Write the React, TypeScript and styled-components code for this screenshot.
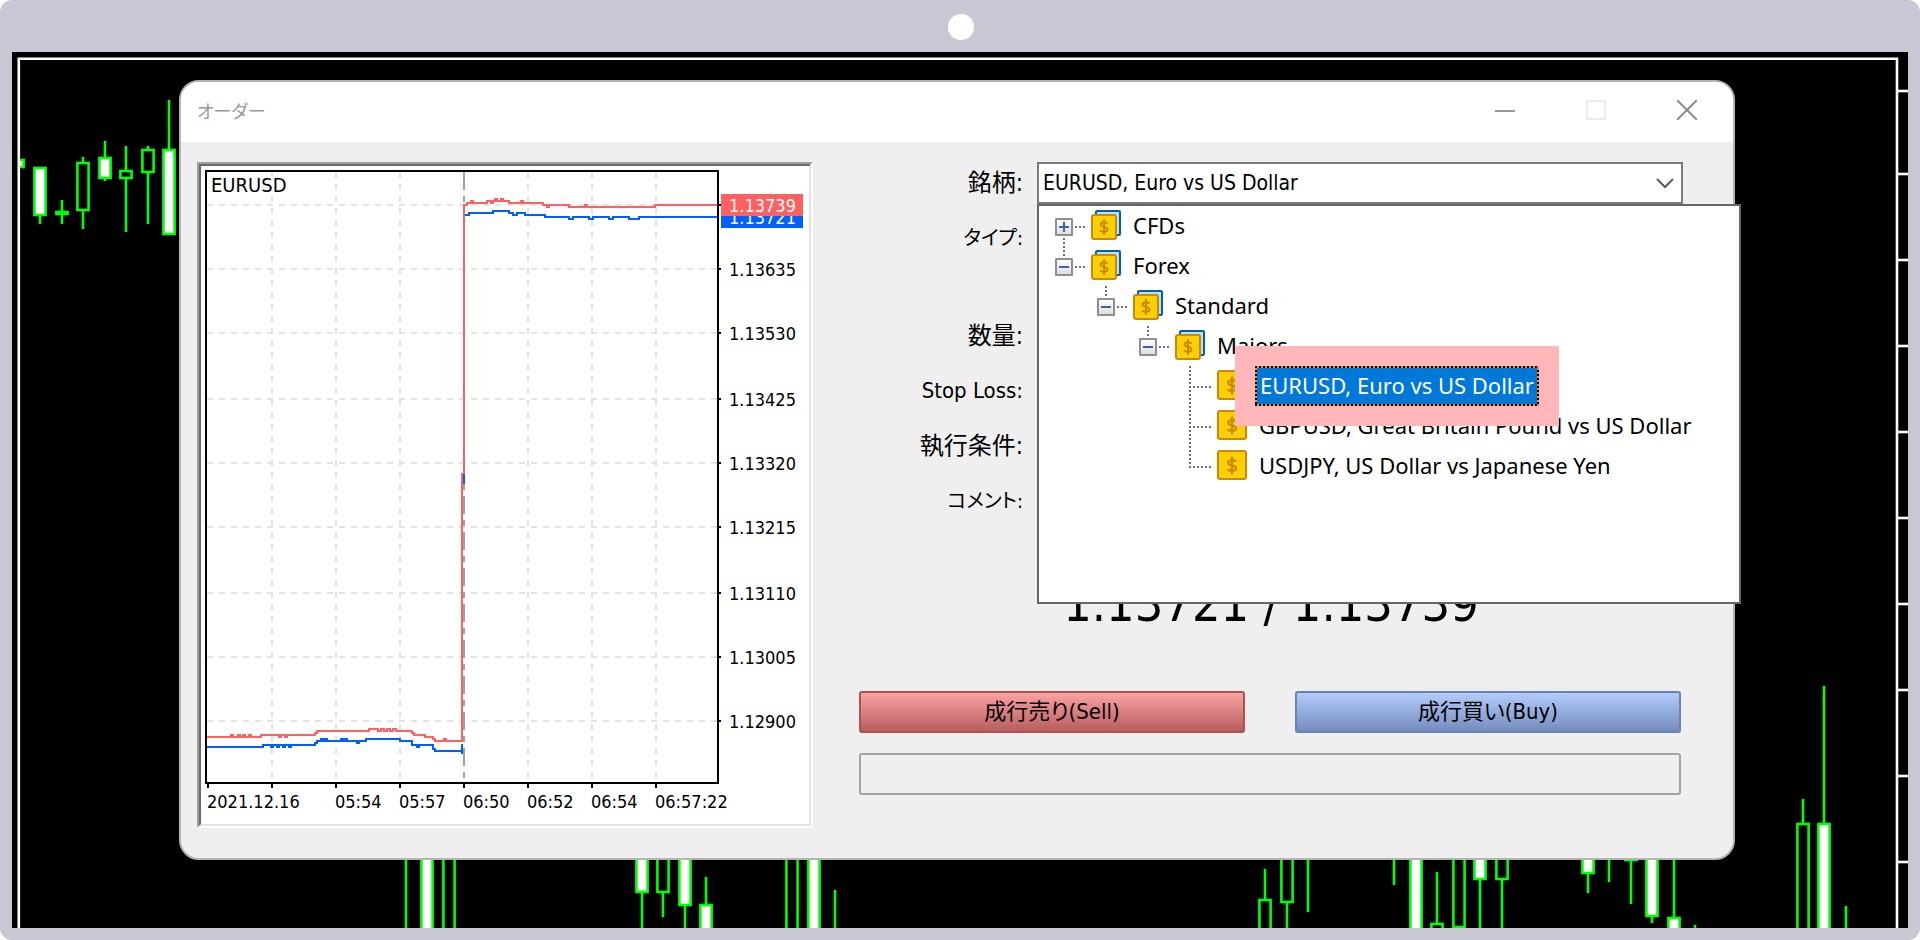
import React from "react";
import styled, { createGlobalStyle, css } from "styled-components";

const tahoma = `"DejaVu Sans Condensed", "Noto Sans CJK JP", sans-serif`;
const segoe = `"Noto Sans", "Noto Sans CJK JP", sans-serif`;
const gothic = `"Noto Sans CJK JP", sans-serif`;

const GlobalStyle = createGlobalStyle`
  *, *::before, *::after { box-sizing: border-box; }
  body { margin: 0; background: #fff; color: #000; font-family: ${tahoma}; }
  button, input, select { font: inherit; color: inherit; }
`;

/* ---------- device frame ---------- */

const Device = styled.div`
  position: relative;
  display: flex;
  min-height: 100vh;
  padding: 52px 12px 12px;
  border-radius: 12px;
  background: #c8c7d3;
`;

const Camera = styled.span`
  position: absolute;
  top: 14px;
  left: 50%;
  width: 26px;
  height: 26px;
  margin-left: -12px;
  border-radius: 50%;
  background: #fff;
`;

const Screen = styled.main`
  position: relative;
  flex: 1;
  padding: 28px 173px 68px 167px;
  overflow: hidden;
  background: #000;
`;

const Backdrop = styled.svg`
  position: absolute;
  inset: 0;
  width: 100%;
  height: 100%;
`;

type Candle = {
  x: number;
  high: number;
  low: number;
  top?: number;
  bottom?: number;
  filled?: boolean;
};

const candles: Candle[] = [
  { x: 18, high: 159, low: 168, top: 160, bottom: 167, filled: true },
  { x: 40, high: 167, low: 224, top: 168, bottom: 215, filled: true },
  { x: 62, high: 200, low: 224, top: 212, bottom: 214 },
  { x: 83, high: 157, low: 229, top: 163, bottom: 210 },
  { x: 105, high: 141, low: 181, top: 158, bottom: 178, filled: true },
  { x: 126, high: 146, low: 232, top: 171, bottom: 178 },
  { x: 148, high: 146, low: 224, top: 150, bottom: 172 },
  { x: 169, high: 100, low: 235, top: 150, bottom: 234, filled: true },
  { x: 406, high: 800, low: 940 },
  { x: 427, high: 800, low: 940, top: 800, bottom: 940, filled: true },
  { x: 449, high: 800, low: 800, top: 800, bottom: 940 },
  { x: 642, high: 800, low: 940, top: 800, bottom: 892, filled: true },
  { x: 663, high: 800, low: 917, top: 800, bottom: 892 },
  { x: 685, high: 800, low: 940, top: 800, bottom: 905, filled: true },
  { x: 706, high: 877, low: 940, top: 905, bottom: 940, filled: true },
  { x: 792, high: 800, low: 800, top: 800, bottom: 940 },
  { x: 814, high: 800, low: 940, top: 800, bottom: 940, filled: true },
  { x: 835, high: 890, low: 940 },
  { x: 1265, high: 869, low: 899, top: 900, bottom: 940 },
  { x: 1287, high: 903, low: 940, top: 800, bottom: 902 },
  { x: 1308, high: 800, low: 912 },
  { x: 1394, high: 800, low: 885 },
  { x: 1416, high: 800, low: 940, top: 800, bottom: 940, filled: true },
  { x: 1437, high: 872, low: 923, top: 924, bottom: 940 },
  { x: 1459, high: 800, low: 800, top: 800, bottom: 927 },
  { x: 1480, high: 800, low: 940, top: 800, bottom: 879, filled: true },
  { x: 1502, high: 879, low: 940, top: 800, bottom: 879 },
  { x: 1588, high: 800, low: 893, top: 800, bottom: 873, filled: true },
  { x: 1609, high: 800, low: 882 },
  { x: 1631, high: 800, low: 904, top: 840, bottom: 860 },
  { x: 1652, high: 800, low: 923, top: 800, bottom: 916, filled: true },
  { x: 1674, high: 800, low: 940, top: 918, bottom: 940, filled: true },
  { x: 1695, high: 925, low: 940 },
  { x: 1803, high: 799, low: 823, top: 824, bottom: 940 },
  { x: 1824, high: 686, low: 940, top: 824, bottom: 940, filled: true },
  { x: 1846, high: 906, low: 940 },
];

const scaleTicks = [91, 174, 260, 346, 432, 518, 604, 690, 776, 862];

function MarketBackdrop() {
  return (
    <Backdrop
      viewBox="12 52 1896 876"
      preserveAspectRatio="xMidYMid slice"
      aria-hidden="true"
    >
      {candles.map((c) => (
        <g key={c.x} stroke="#00ff00" strokeWidth="2.6">
          {c.high < c.low && <line x1={c.x} x2={c.x} y1={c.high} y2={c.low} />}
          {c.top !== undefined && c.bottom !== undefined && (
            <rect
              x={c.x - 5.6}
              y={c.top}
              width="11.2"
              height={c.bottom - c.top}
              fill={c.filled ? "#fff" : "#000"}
            />
          )}
        </g>
      ))}
      <rect x="12" y="52" width="6" height="888" fill="#000" />
      <g stroke="#fff" strokeWidth="2.6">
        <path d="M18.8 940V58.8H1897V940" fill="none" />
        {scaleTicks.map((y) => (
          <line key={y} x1="1898" x2="1908" y1={y} y2={y} />
        ))}
      </g>
    </Backdrop>
  );
}

/* ---------- order window ---------- */

const Dialog = styled.section`
  position: relative;
  border: 2px solid #b4b4b4;
  border-radius: 20px;
  background: #efefef;
`;

const TitleBar = styled.header`
  display: flex;
  align-items: center;
  justify-content: space-between;
  height: 60px;
  padding: 0 1px 4px 16px;
  border-radius: 18px 18px 0 0;
  background: #fff;
`;

const Title = styled.h1`
  margin: 0;
  color: #999;
  font: 400 18px/40px ${gothic};
  font-feature-settings: "palt";
`;

const WindowButtons = styled.div`
  display: flex;
`;

const WindowButton = styled.button`
  display: grid;
  place-items: center;
  width: 91px;
  height: 56px;
  margin: 0;
  padding: 0;
  border: 0;
  background: none;
`;

const Body = styled.div`
  display: flex;
  gap: 46px;
  padding: 20px 50px 30px 16px;
`;

/* ---------- tick chart ---------- */

const ChartPanel = styled.figure`
  flex: 0 0 616px;
  margin: 0;
  border: 2px solid;
  border-color: #a0a0a0 #fff #fff #a0a0a0;
`;

const ChartInset = styled.div`
  border: 2px solid;
  border-color: #696969 #e3e3e3 #e3e3e3 #696969;
  background: #fff;
`;

const ChartSvg = styled.svg`
  display: block;
  width: 608px;
  height: 658px;
  font-family: ${tahoma};
  font-size: 18px;
`;

const columns = [272, 336, 400, 528, 592, 656];
const priceRows: [number, string][] = [
  [269, "1.13635"],
  [333, "1.13530"],
  [399, "1.13425"],
  [463, "1.13320"],
  [527, "1.13215"],
  [593, "1.13110"],
  [657, "1.13005"],
  [721, "1.12900"],
];
const times: [number, string][] = [
  [207, "2021.12.16"],
  [335, "05:54"],
  [399, "05:57"],
  [463, "06:50"],
  [527, "06:52"],
  [591, "06:54"],
  [655, "06:57:22"],
];

const askLine =
  "M207 737H231V735H233V737H238V735H240V737H243V735H245V737H249V735H251V737H261V735H279V737H281V735H285V737H287V735H315V733H317V731H369V729H378V731H381V729H384V731H387V729H390V731H393V729H396V731H412V733H414V735H425V737H433V739H435V741H444V739H446V741H462V474H464V205H467V203H471V201H473V203H487V201H491V203H493V201H495V199H497V201H501V199H503V201H509V203H521V201H523V203H543V205H547V207H549V205H569V207H585V205H587V207H655V205H717";
const bidLine =
  "M207 747H263V745H271V747H273V745H277V747H279V745H283V747H285V745H289V747H291V745H315V743H317V741H321V739H323V741H325V739H327V741H341V739H343V741H345V739H347V741H357V743H359V741H366V739H400V741H412V745H417V747H419V745H425V745H433V749H435V751H462";
const bidTopLine =
  "M465 215H469V213H493V211H509V213H513V215H517V213H525V215H545V217H569V219H573V217H589V219H593V217H609V219H613V217H629V219H639V217H717";

function TickChart() {
  return (
    <ChartPanel>
      <ChartInset>
        <ChartSvg viewBox="201 166 608 658" role="img" aria-label="EURUSD">
          <g shapeRendering="crispEdges" fill="none" strokeWidth="2">
            <g stroke="#e3e3e3" strokeDasharray="6 6">
              {columns.map((x) => (
                <line key={x} x1={x} x2={x} y1="172" y2="782" />
              ))}
              <line x1="207" x2="717" y1="205" y2="205" />
              {priceRows.map(([y]) => (
                <line key={y} x1="207" x2="717" y1={y} y2={y} />
              ))}
            </g>
            <line x1="464" x2="464" y1="172" y2="782" stroke="#a0a0a0" strokeDasharray="18 6 6 6" />
            <path d={bidLine} stroke="#0060ff" />
            <path d={bidTopLine} stroke="#0060ff" />
            <path d={askLine} stroke="#ff6060" />
            <path d="M462 744V754M464 474V484" stroke="#0060ff" />
            <rect x="206" y="171" width="512" height="612" stroke="#000" />
            <g stroke="#000">
              <line x1="718" x2="721" y1="205" y2="205" />
              {priceRows.map(([y]) => (
                <line key={y} x1="718" x2="721" y1={y} y2={y} />
              ))}
              {[208, 272, 336, 400, 464, 528, 592, 656].map((x) => (
                <line key={x} x1={x} x2={x} y1="782" y2="788" />
              ))}
            </g>
          </g>
          <rect x="208" y="176" width="82" height="20" fill="#fff" />
          <text x="211" y="192" fontSize="20">
            EURUSD
          </text>
          {priceRows.map(([y, label]) => (
            <text key={label} x="729" y={y + 7}>
              {label}
            </text>
          ))}
          {times.map(([x, label]) => (
            <text key={label} x={x} y="808">
              {label}
            </text>
          ))}
          <rect x="721" y="206" width="82" height="22" fill="#0060ff" />
          <text x="729" y="224" fill="#fff">
            1.13721
          </text>
          <rect x="721" y="194" width="82" height="22" fill="#ff6060" />
          <text x="729" y="212" fill="#fff">
            1.13739
          </text>
        </ChartSvg>
      </ChartInset>
    </ChartPanel>
  );
}

/* ---------- order form ---------- */

const Form = styled.form`
  flex: 1;
  min-width: 0;
`;

const Field = styled.div<{ $spaced?: boolean }>`
  position: relative;
  display: grid;
  grid-template-columns: 164px 1fr;
  column-gap: 14px;
  align-items: center;
  height: 42px;
  margin-bottom: ${(p) => (p.$spaced ? 56 : 13)}px;
`;

const labelSizes = { kanji: 24, latin: 22, kana: 20 };

const Label = styled.label<{ $script: keyof typeof labelSizes }>`
  text-align: right;
  white-space: nowrap;
  line-height: 36px;
  font-family: ${tahoma};
  font-size: ${(p) => labelSizes[p.$script]}px;
  font-feature-settings: "palt";
`;

const box = css`
  width: 100%;
  height: 42px;
  margin: 0;
  border: 2px solid #7a7a7a;
  border-radius: 0;
  background: #fff;
`;

const Input = styled.input`
  ${box}
`;

const SelectWrap = styled.div`
  position: relative;
`;

const Select = styled.select`
  ${box}
  display: block;
  appearance: none;
  padding: 0 40px 0 4px;
  font-family: ${tahoma};
  font-size: 21px;
`;

const SelectArrow = styled.svg`
  position: absolute;
  right: 9px;
  top: 13px;
  width: 18px;
  height: 16px;
  pointer-events: none;
`;

const Price = styled.p`
  margin: 56px 0 61px;
  text-align: center;
  font-size: 50px;
  line-height: 52px;
  white-space: nowrap;
`;

const Actions = styled.div`
  display: grid;
  grid-template-columns: 1fr 1fr;
  gap: 50px;
  margin-bottom: 20px;
  padding-right: 2px;
`;

const ActionButton = styled.button<{ $side: "sell" | "buy" }>`
  height: 42px;
  padding: 0;
  border: 2px solid ${(p) => (p.$side === "sell" ? "#ae5353" : "#6a82b4")};
  border-radius: 3px;
  background: ${(p) =>
    p.$side === "sell"
      ? "linear-gradient(#fba3a3, #b75d5d)"
      : "linear-gradient(#b4ccfb, #748dbd)"};
  font-family: ${tahoma};
  font-size: 22px;
  line-height: 36px;
  font-feature-settings: "palt";
`;

const Status = styled.output`
  display: block;
  height: 42px;
  margin-right: 2px;
  border: 2px solid #a3a3a3;
  border-radius: 3px;
`;

/* ---------- symbol tree ---------- */

const Popup = styled.div`
  position: absolute;
  z-index: 2;
  top: 42px;
  left: 178px;
  right: -58px;
  height: 400px;
  border: 2px solid #666;
  background: #fff;
`;

const Tree = styled.ul`
  margin: 0;
  padding: 0;
  list-style: none;
`;

const dots = (direction: string) => css`
  background: repeating-linear-gradient(${direction}, #707070 0 2px, transparent 2px 4px);
`;

const Row = styled.li<{ $depth: number; $lineTop: number; $lineHeight: number }>`
  position: relative;
  display: flex;
  align-items: center;
  height: 40px;
  padding-left: ${(p) => 16 + p.$depth * 42}px;

  &::before {
    content: "";
    position: absolute;
    left: ${(p) => 24 + p.$depth * 42}px;
    top: ${(p) => p.$lineTop}px;
    width: 2px;
    height: ${(p) => p.$lineHeight}px;
    ${dots("to bottom")}
  }
`;

const Expander = styled.button`
  display: grid;
  place-items: center;
  width: 18px;
  height: 18px;
  margin-top: 2px;
  padding: 0;
  border: 2px solid #8f8f8f;
  border-radius: 1px;
  background: linear-gradient(#fff, #dedede);
`;

const Branch = styled.span<{ $leaf?: boolean }>`
  width: ${(p) => (p.$leaf ? 22 : 10)}px;
  height: 2px;
  margin: ${(p) => (p.$leaf ? "2px 6px 0 8px" : "2px 6px 0 2px")};
  ${dots("to right")}
`;

const Icon = styled.svg`
  width: 30px;
  height: 30px;
  margin-bottom: 2px;
`;

const itemText = css`
  height: 40px;
  padding: 0 4px 3px;
  font-family: ${segoe};
  font-size: 22px;
  line-height: 34px;
  white-space: nowrap;
`;

const ItemLabel = styled.button`
  ${itemText}
  margin: 0 0 0 8px;
  border: 0;
  background: none;
`;

const dash = (direction: string) =>
  `repeating-linear-gradient(${direction}, #000 0 2px, #ff8728 2px 4px)`;

const Selected = styled.button`
  ${itemText}
  position: relative;
  z-index: 1;
  margin: 0 0 0 8px;
  padding-left: 5px;
  padding-right: 5px;
  border: 0;
  color: #fff;
  background:
    ${dash("to right")} 0 0 / 100% 2px no-repeat,
    ${dash("to right")} 0 100% / 100% 2px no-repeat,
    ${dash("to bottom")} 0 0 / 2px 100% no-repeat,
    ${dash("to bottom")} 100% 0 / 2px 100% no-repeat,
    #0078d7;
`;

const Highlight = styled.span`
  position: relative;
  z-index: 1;

  &::before {
    content: "";
    position: absolute;
    top: -20px;
    right: -20px;
    bottom: -20px;
    left: -12px;
    background: #ffb7b9;
  }
`;

const dollar =
  "M19 11.5C18.2 10.6 17 10.2 15.5 10.2C13.4 10.2 12.1 11.1 12.1 12.6C12.1 16 19 14 19 17.5C19 19 17.6 19.9 15.4 19.9C13.8 19.9 12.4 19.4 11.6 18.4M15.5 7V23";

function FolderIcon() {
  return (
    <Icon viewBox="0 0 30 30" fill="none" strokeWidth="2" aria-hidden="true">
      <rect x="5" y="1" width="24" height="24" rx="1" fill="#c0def5" stroke="#0060a8" />
      <rect x="1" y="5" width="24" height="24" rx="2" fill="#fccf05" stroke="#c78a0a" />
      <path d={dollar} transform="translate(-2.5 2)" stroke="#c78a0a" />
    </Icon>
  );
}

function SymbolIcon() {
  return (
    <Icon viewBox="0 0 30 30" fill="none" strokeWidth="2" aria-hidden="true">
      <rect x="1" y="1" width="28" height="28" rx="2" fill="#fccf05" stroke="#c78a0a" />
      <path d={dollar} transform="translate(-2.5 -1.5) scale(1.13)" stroke="#c78a0a" />
    </Icon>
  );
}

type Node = {
  label: string;
  depth: number;
  kind: "closed" | "open" | "symbol";
  line: [number, number];
  selected?: boolean;
};

const nodes: Node[] = [
  { label: "CFDs", depth: 0, kind: "closed", line: [0, 0] },
  { label: "Forex", depth: 0, kind: "open", line: [-8, 18] },
  { label: "Standard", depth: 1, kind: "open", line: [0, 10] },
  { label: "Majors", depth: 2, kind: "open", line: [0, 10] },
  { label: "EURUSD, Euro vs US Dollar", depth: 3, kind: "symbol", line: [0, 40], selected: true },
  { label: "GBPUSD, Great Britain Pound vs US Dollar", depth: 3, kind: "symbol", line: [0, 40] },
  { label: "USDJPY, US Dollar vs Japanese Yen", depth: 3, kind: "symbol", line: [0, 22] },
];

function TreeNode({ node }: { node: Node }) {
  const leaf = node.kind === "symbol";
  return (
    <Row
      role="treeitem"
      aria-selected={!!node.selected}
      $depth={node.depth}
      $lineTop={node.line[0]}
      $lineHeight={node.line[1]}
    >
      {!leaf && (
        <Expander type="button" aria-label={node.kind === "open" ? "Collapse" : "Expand"}>
          <svg width="10" height="10" viewBox="0 0 10 10" stroke="#3f5fa8" strokeWidth="2">
            <path d={node.kind === "open" ? "M0 5H10" : "M0 5H10M5 0V10"} />
          </svg>
        </Expander>
      )}
      <Branch $leaf={leaf} />
      {leaf ? <SymbolIcon /> : <FolderIcon />}
      {node.selected ? (
        <Highlight>
          <Selected type="button">{node.label}</Selected>
        </Highlight>
      ) : (
        <ItemLabel type="button">{node.label}</ItemLabel>
      )}
    </Row>
  );
}

export default function App() {
  return (
    <>
      <GlobalStyle />
      <Device>
        <Camera />
        <Screen>
          <MarketBackdrop />
          <Dialog aria-labelledby="order-title">
            <TitleBar>
              <Title id="order-title">オーダー</Title>
              <WindowButtons>
                <WindowButton type="button" aria-label="最小化">
                  <svg width="20" height="20" viewBox="0 0 20 20" stroke="#999" strokeWidth="2">
                    <path d="M0 11H20" />
                  </svg>
                </WindowButton>
                <WindowButton type="button" aria-label="最大化" disabled>
                  <svg width="20" height="20" viewBox="0 0 20 20" stroke="#ececec" strokeWidth="2" fill="none">
                    <path d="M1 1H19V19H1Z" />
                  </svg>
                </WindowButton>
                <WindowButton type="button" aria-label="閉じる">
                  <svg width="20" height="20" viewBox="0 0 20 20" stroke="#8c8c8c" strokeWidth="2">
                    <path d="M0 0L20 20M20 0L0 20" />
                  </svg>
                </WindowButton>
              </WindowButtons>
            </TitleBar>
            <Body>
              <TickChart />
              <Form onSubmit={(e) => e.preventDefault()}>
                <Field>
                  <Label htmlFor="symbol" $script="kanji">銘柄:</Label>
                  <SelectWrap>
                    <Select id="symbol" defaultValue="EURUSD">
                      <option value="EURUSD">EURUSD, Euro vs US Dollar</option>
                    </Select>
                    <SelectArrow viewBox="0 0 18 16" fill="none" stroke="#5a5a5a" strokeWidth="2">
                      <path d="M1 4L9 12L17 4" />
                    </SelectArrow>
                  </SelectWrap>
                  <Popup>
                    <Tree role="tree" aria-label="銘柄">
                      {nodes.map((n) => (
                        <TreeNode key={n.label} node={n} />
                      ))}
                    </Tree>
                  </Popup>
                </Field>
                <Field $spaced>
                  <Label htmlFor="type" $script="kana">タイプ:</Label>
                  <Input id="type" />
                </Field>
                <Field>
                  <Label htmlFor="volume" $script="kanji">数量:</Label>
                  <Input id="volume" />
                </Field>
                <Field>
                  <Label htmlFor="stop" $script="latin">Stop Loss:</Label>
                  <Input id="stop" />
                </Field>
                <Field>
                  <Label htmlFor="fill" $script="kanji">執行条件:</Label>
                  <Input id="fill" />
                </Field>
                <Field>
                  <Label htmlFor="comment" $script="kana">コメント:</Label>
                  <Input id="comment" />
                </Field>
                <Price>1.13721 / 1.13739</Price>
                <Actions>
                  <ActionButton type="submit" $side="sell">成行売り(Sell)</ActionButton>
                  <ActionButton type="submit" $side="buy">成行買い(Buy)</ActionButton>
                </Actions>
                <Status />
              </Form>
            </Body>
          </Dialog>
        </Screen>
      </Device>
    </>
  );
}
